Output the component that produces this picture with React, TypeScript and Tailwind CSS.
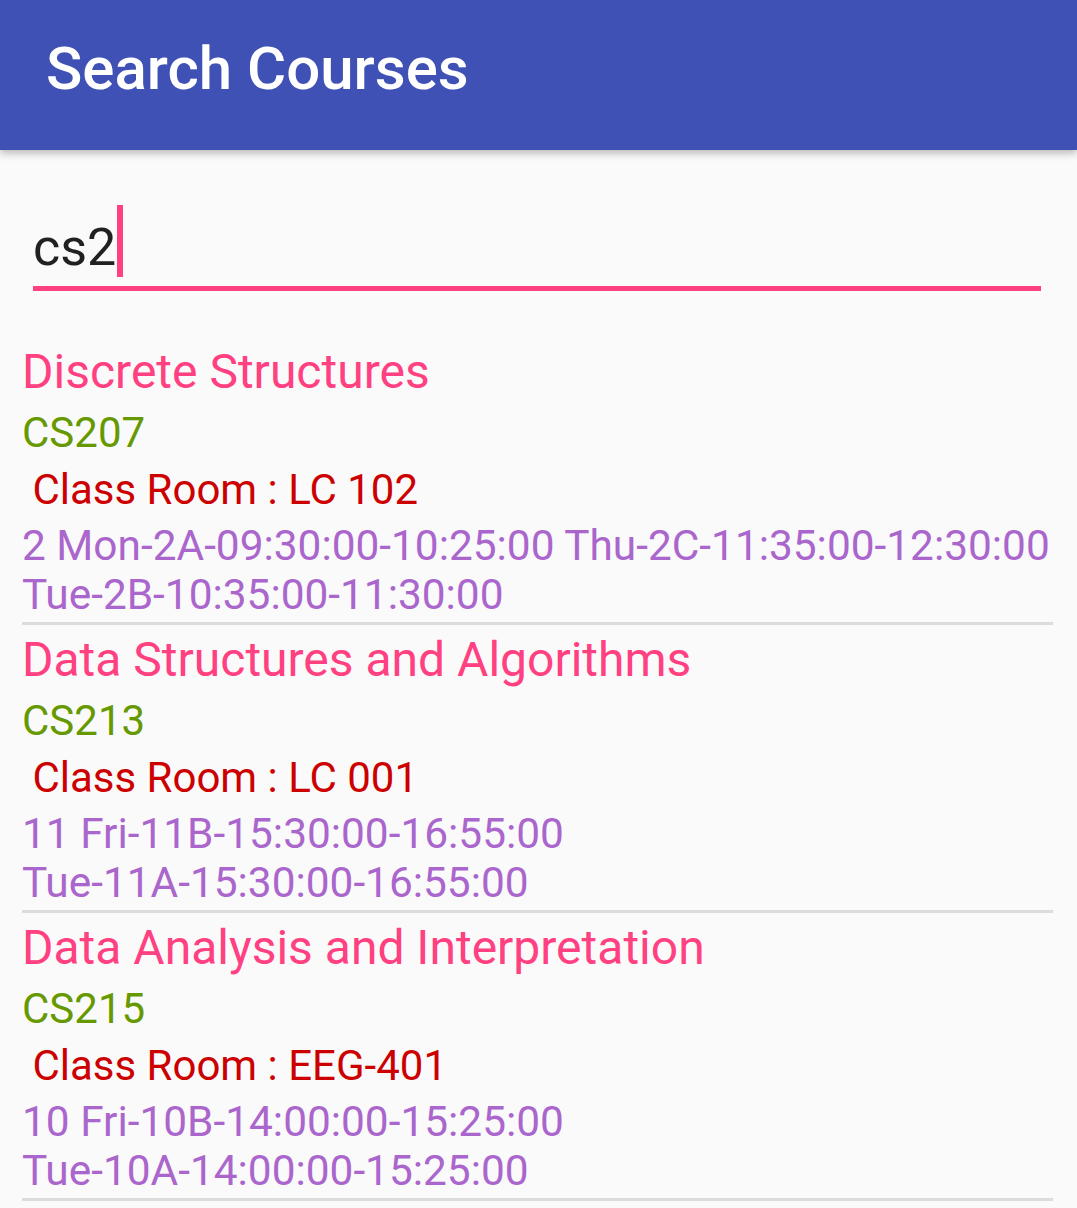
import React from 'react';

interface Course {
  name: string;
  code: string;
  room: string;
  slots: string[];
}

const courses: Course[] = [
  {
    name: 'Discrete Structures',
    code: 'CS207',
    room: 'LC 102',
    slots: ['2 Mon-2A-09:30:00-10:25:00 Thu-2C-11:35:00-12:30:00', 'Tue-2B-10:35:00-11:30:00'],
  },
  {
    name: 'Data Structures and Algorithms',
    code: 'CS213',
    room: 'LC 001',
    slots: ['11 Fri-11B-15:30:00-16:55:00', 'Tue-11A-15:30:00-16:55:00'],
  },
  {
    name: 'Data Analysis and Interpretation',
    code: 'CS215',
    room: 'EEG-401',
    slots: ['10 Fri-10B-14:00:00-15:25:00', 'Tue-10A-14:00:00-15:25:00'],
  },
];

export default function App() {
  return (
    <div className="min-h-[1208px] bg-[#fafafa] font-['Roboto',sans-serif] overflow-hidden">
      {/* Toolbar */}
      <header className="relative z-10 h-[150px] bg-[#3f51b5] pl-[46px] pt-[34px] shadow-[0_3px_8px_rgba(0,0,0,0.28)]">
        <h1 className="text-[60px] leading-[70px] font-medium text-white">Search Courses</h1>
      </header>

      {/* Search field */}
      <div className="ml-[33px] mr-[36px] mt-[56px]">
        <div className="flex h-[72px] items-end">
          <span className="text-[52px] leading-[61px] text-[#212121]">cs2</span>
          <span className="mb-[1px] ml-[1px] h-[72px] w-[6px] bg-[#ff4081]" />
        </div>
        <div className="mt-[8px] h-[5px] bg-[#ff4081]" />
      </div>

      {/* Results */}
      <ul className="ml-[22px] mr-[24px] mt-[53px]">
        {courses.map((course, i) => (
          <li key={course.code} className={i === 0 ? '' : 'mt-[7px]'}>
            <p className="text-[48px] leading-[56px] text-[#ff4081]">{course.name}</p>
            <p className="mt-[8px] text-[42px] leading-[49px] text-[#669900]">{course.code}</p>
            <p className="mt-[8px] whitespace-pre text-[42px] leading-[49px] text-[#cc0000]">
              {' Class Room : ' + course.room}
            </p>
            <div className="mt-[8px] text-[42.4px] leading-[48.5px] text-[#aa66cc]">
              {course.slots.map((s) => (
                <p key={s} className="whitespace-nowrap">{s}</p>
              ))}
            </div>
            <div className="mt-[3px] h-[3px] bg-[#dcdcdc]" />
          </li>
        ))}
      </ul>
    </div>
  );
}
